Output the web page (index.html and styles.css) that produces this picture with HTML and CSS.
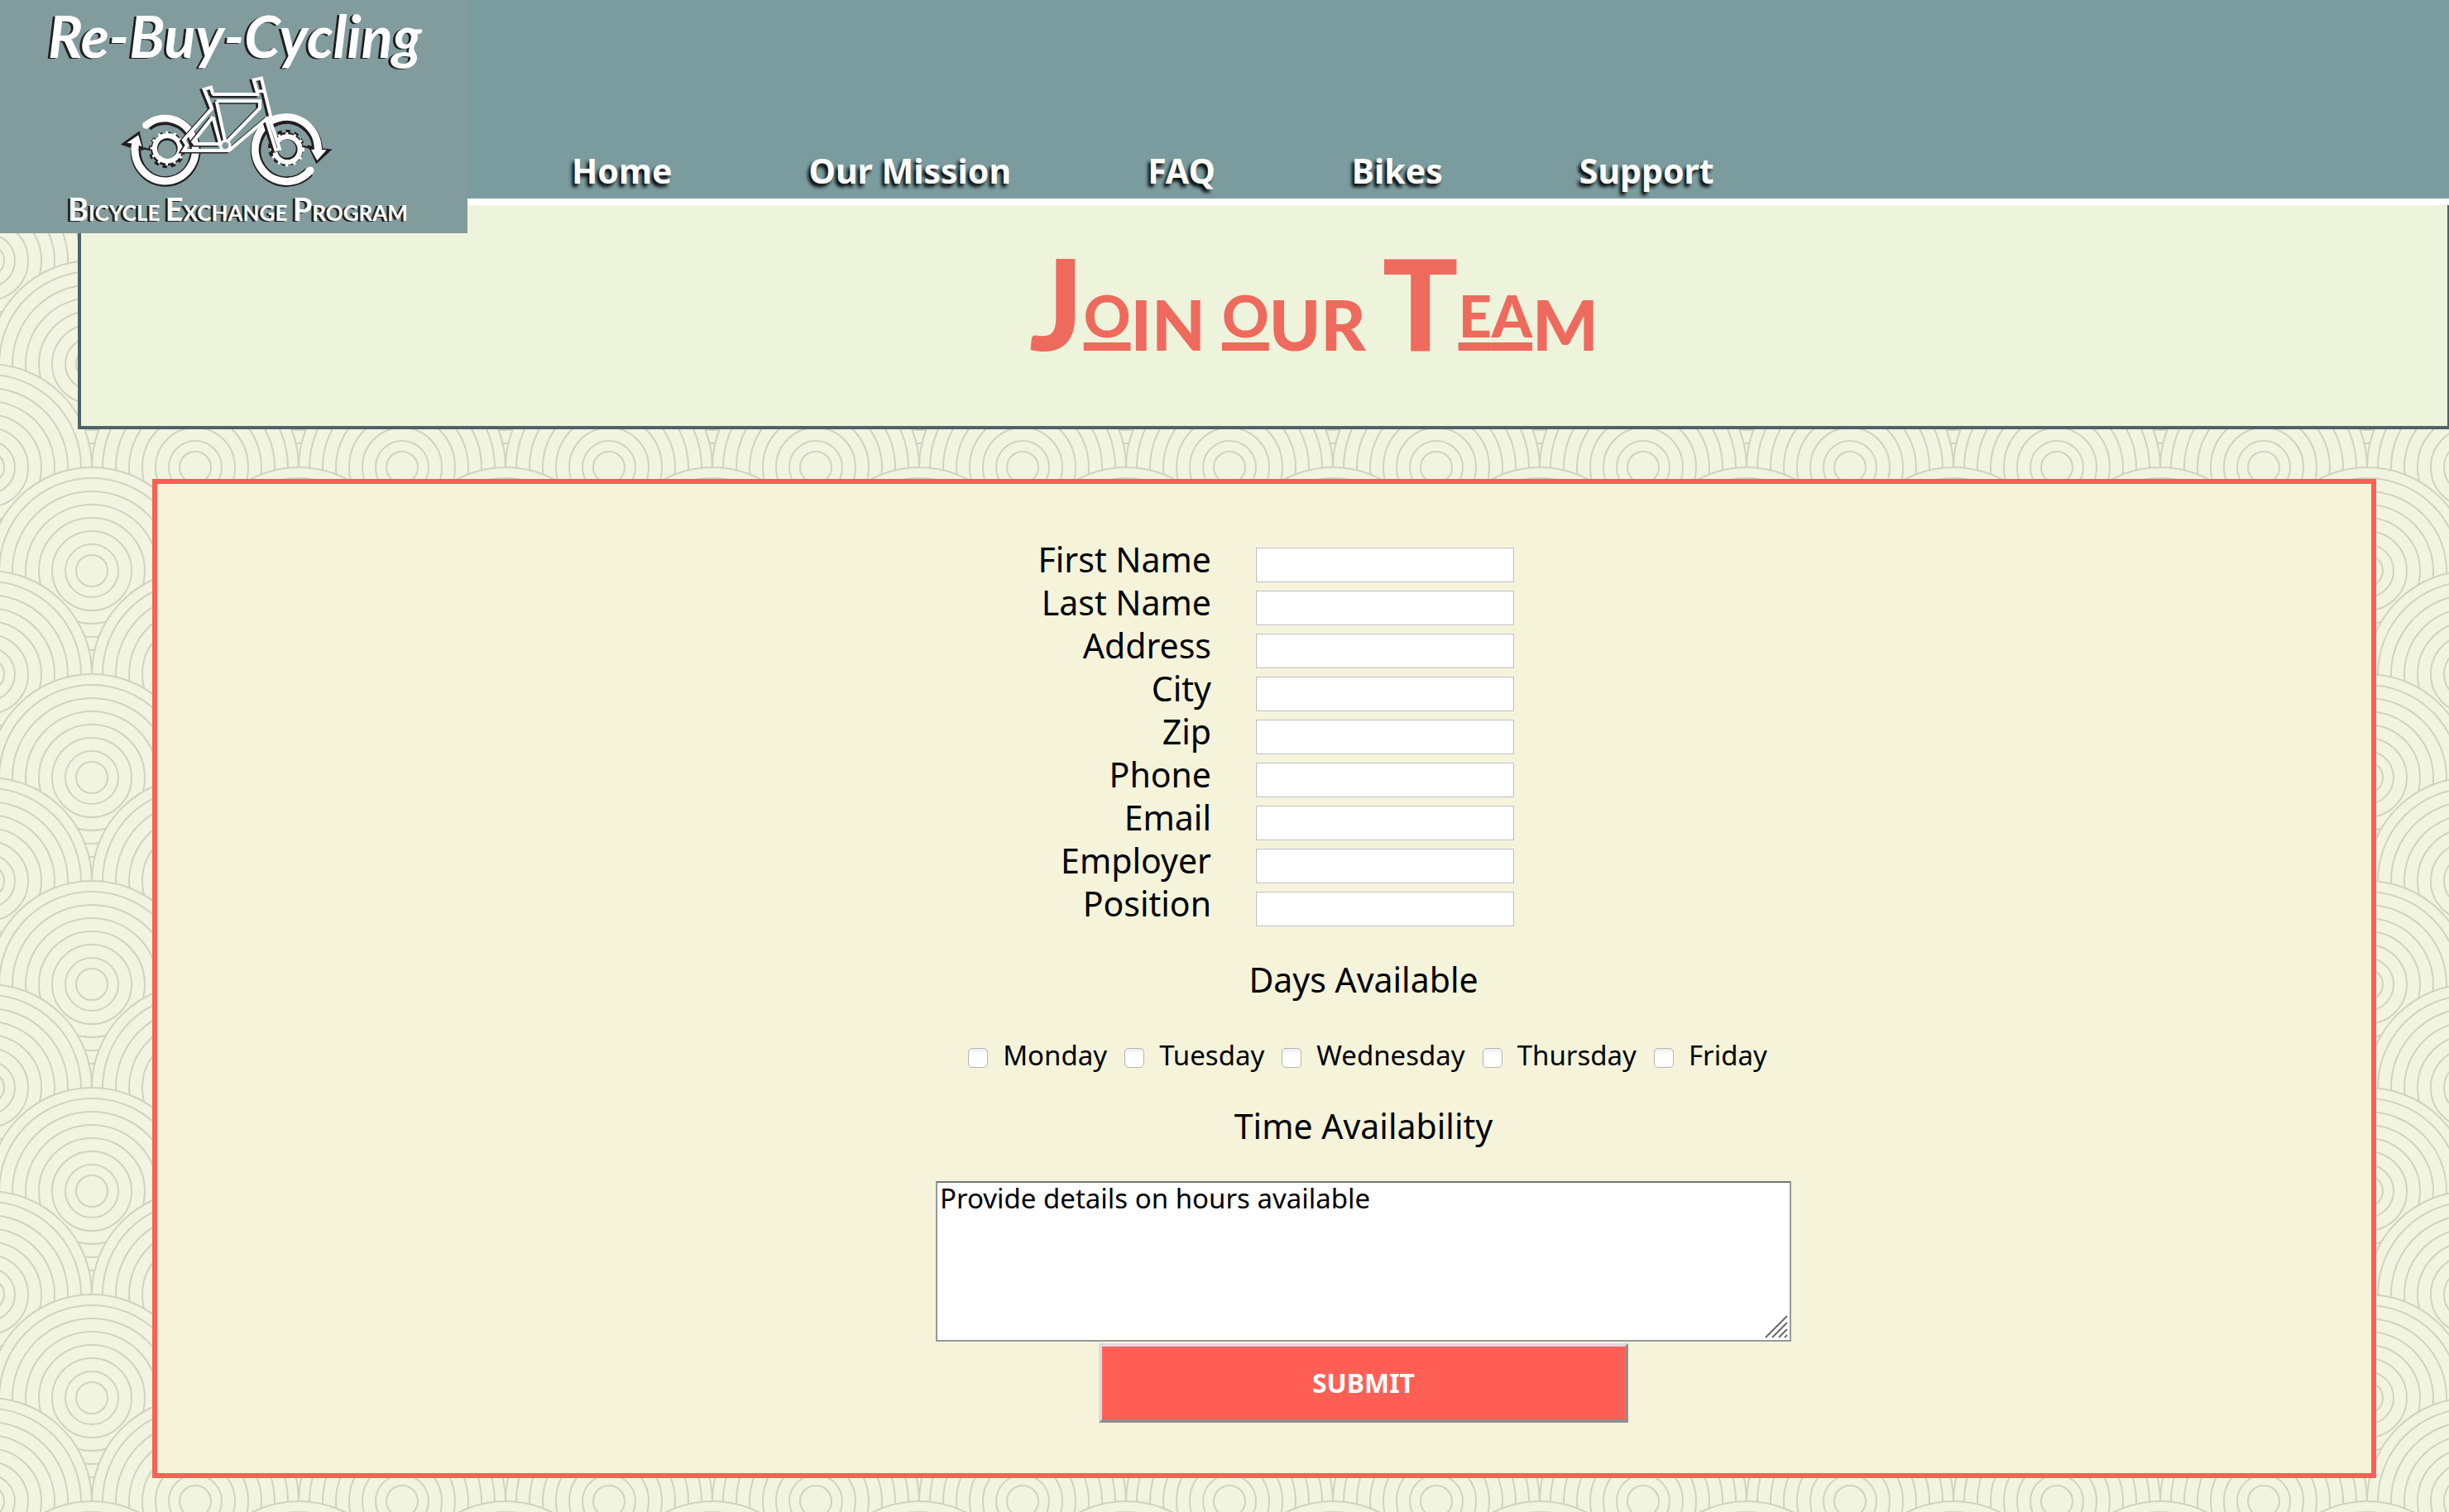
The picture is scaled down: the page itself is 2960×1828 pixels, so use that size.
FILE: index.html
```html
<!DOCTYPE html>
<html lang="en">
<head>
<meta charset="utf-8">
<title>Re-Buy-Cycling | Join Our Team</title>
<link rel="stylesheet" href="styles.css">
</head>
<body>
<header class="site-header">
  <a class="logo" href="#" aria-label="Re-Buy-Cycling Bicycle Exchange Program">
    <svg viewBox="0 0 565 282" width="565" height="282">
      <text class="logo-script" x="58" y="70">Re-Buy-Cycling</text>
      <g transform="translate(140 84) scale(.3333)" fill="none">
        <g stroke="#231f20">
          <path stroke-width="38" d="M115 205A108 112 0 1 1 72 290M700 372A112 114 0 1 1 731 285"/>
          <path fill="#231f20" stroke-width="6" d="M24 271L84 228L98 290L72 288ZM778 292L728 338L700 278L731 287Z"/>
        </g>
        <g stroke="#fff">
          <path stroke-width="27" stroke-linecap="round" d="M110 202A110 114 0 1 1 70 275M705 366A114 117 0 1 1 733 290"/>
          <path fill="#fff" stroke="none" d="M40 266L82 238L94 280L72 270ZM764 292L730 330L708 290Z"/>
        </g>
        <g stroke="#231f20">
          <circle cx="185" cy="292" r="56" stroke-width="20" stroke-dasharray="15 14"/>
          <circle cx="618" cy="284" r="56" stroke-width="20" stroke-dasharray="15 14"/>
          <circle cx="186" cy="290" r="46" stroke-width="26"/>
          <circle cx="620" cy="287" r="46" stroke-width="26"/>
          <path stroke-width="7" d="M100 286L130 292M674 278L716 286"/>
        </g>
        <g stroke="#fff">
          <circle cx="187" cy="286" r="46" stroke-width="18"/>
          <circle cx="622" cy="290" r="46" stroke-width="18"/>
          <circle cx="187" cy="286" r="57" stroke-width="10" stroke-dasharray="9 20"/>
          <circle cx="622" cy="290" r="57" stroke-width="10" stroke-dasharray="9 20"/>
        </g>
        <g stroke="#231f20" stroke-width="13" transform="translate(-8 4)">
          <path d="M352 90L345 65L320 72L348 142L246 256L258 275L246 294H410L545 180L580 292L594 288L555 172M350 92H520M540 78L512 80L500 38L528 32L562 172L545 180M365 115H522V140L403 262M365 115L397 262M352 172L280 262L286 270H378M352 172L378 266"/>
        </g>
        <g stroke="#fff" stroke-width="12">
          <path d="M352 90L345 65L320 72L348 142L246 256L258 275L246 294H410L545 180L580 292L594 288L555 172M350 90H520M540 78L512 80L500 38L528 32L562 172L545 180M365 115H522V140L403 262M365 115L397 262M352 172L280 262L286 270H378M352 172L378 266"/>
          <circle cx="397" cy="276" r="17" fill="#829c9d" stroke-width="9"/>
        </g>
      </g>
      <text class="logo-caps" x="82" y="267"><tspan class="logo-initial">B</tspan>ICYCLE <tspan class="logo-initial">E</tspan>XCHANGE <tspan class="logo-initial">P</tspan>ROGRAM</text>
    </svg>
  </a>
  <nav class="main-nav">
    <a href="#">Home</a>
    <a href="#">Our Mission</a>
    <a href="#">FAQ</a>
    <a href="#">Bikes</a>
    <a href="#">Support</a>
  </nav>
</header>

<section class="banner">
  <h1><span class="tall">J</span><span class="lined">O</span>IN <span class="lined">O</span>UR <span class="tall">T</span><span class="lined">E</span><span class="lined">A</span>M</h1>
</section>

<main class="panel">
  <form class="team-form">
    <div class="field"><label for="first">First Name</label><input id="first" type="text"></div>
    <div class="field"><label for="last">Last Name</label><input id="last" type="text"></div>
    <div class="field"><label for="address">Address</label><input id="address" type="text"></div>
    <div class="field"><label for="city">City</label><input id="city" type="text"></div>
    <div class="field"><label for="zip">Zip</label><input id="zip" type="text"></div>
    <div class="field"><label for="phone">Phone</label><input id="phone" type="tel"></div>
    <div class="field"><label for="email">Email</label><input id="email" type="email"></div>
    <div class="field"><label for="employer">Employer</label><input id="employer" type="text"></div>
    <div class="field"><label for="position">Position</label><input id="position" type="text"></div>

    <h2 id="days-title">Days Available</h2>
    <div class="days" role="group" aria-labelledby="days-title">
      <label><input type="checkbox">Monday</label>
      <label><input type="checkbox">Tuesday</label>
      <label><input type="checkbox">Wednesday</label>
      <label><input type="checkbox">Thursday</label>
      <label><input type="checkbox">Friday</label>
    </div>

    <h2><label for="hours">Time Availability</label></h2>
    <textarea id="hours">Provide details on hours available</textarea>
    <button class="submit" type="submit">SUBMIT</button>
  </form>
</main>
</body>
</html>
```
FILE: styles.css
```css
* { box-sizing: border-box; }

body {
  margin: 0;
  font-family: "Noto Sans", "Lucida Grande", sans-serif;
  font-size: 41px;
  color: #000;
  background-color: #f1f4e0;
  background-image: url("data:image/svg+xml,%3Csvg xmlns='http://www.w3.org/2000/svg' xmlns:xlink='http://www.w3.org/1999/xlink' width='250' height='250'%3E%3Cdefs%3E%3Cg id='c' fill='none' stroke='%23d0d4bf' stroke-width='2'%3E%3Ccircle r='125' fill='%23f1f4e0'/%3E%3Ccircle r='112'/%3E%3Ccircle r='96'/%3E%3Ccircle r='80'/%3E%3Ccircle r='64'/%3E%3Ccircle r='48'/%3E%3Ccircle r='32'/%3E%3Ccircle r='19'/%3E%3C/g%3E%3C/defs%3E%3Cuse xlink:href='%23c' x='-14' y='-185'/%3E%3Cuse xlink:href='%23c' x='236' y='-185'/%3E%3Cuse xlink:href='%23c' x='111' y='-60'/%3E%3Cuse xlink:href='%23c' x='361' y='-60'/%3E%3Cuse xlink:href='%23c' x='-14' y='65'/%3E%3Cuse xlink:href='%23c' x='236' y='65'/%3E%3Cuse xlink:href='%23c' x='111' y='190'/%3E%3Cuse xlink:href='%23c' x='361' y='190'/%3E%3Cuse xlink:href='%23c' x='-14' y='315'/%3E%3Cuse xlink:href='%23c' x='236' y='315'/%3E%3C/svg%3E");
}

.site-header {
  position: relative;
  background: #7b9c9e;
  border-bottom: 8px solid #fff;
}

.logo {
  position: absolute;
  top: 0;
  left: 0;
  background: #829c9d;
}

.logo svg { display: block; }

.logo text {
  font-family: Lato, sans-serif;
  fill: #fff;
  text-shadow: -3px 1px 0 #231f20;
}

.logo .logo-script {
  font-size: 70px;
  font-style: italic;
  font-weight: 700;
}

.logo .logo-caps {
  font-size: 26px;
  font-weight: 700;
}

.logo-initial { font-size: 38px; }

.main-nav {
  display: flex;
  gap: 165px;
  padding: 182px 0 10px 691px;
}

.main-nav a {
  color: #fff;
  font-size: 41px;
  font-weight: 700;
  line-height: 48px;
  text-decoration: none;
  text-shadow: -3px 4px 4px #000;
}

.banner {
  margin-left: 94px;
  padding: 36px 0 42px 120px;
  background: #eef3dc;
  border: 4px solid #4e6267;
  border-top: 0;
  border-right-width: 2px;
  text-align: center;
}

.banner h1 {
  margin: 0;
  color: #ee6a5d;
  font-family: Lato, sans-serif;
  font-size: 84px;
  font-weight: 900;
  line-height: 162px;
}

.banner .tall { font-size: 152px; }

.banner .lined {
  font-size: 70px;
  vertical-align: 16px;
  text-decoration: underline;
  text-decoration-thickness: 10px;
  text-decoration-skip-ink: none;
  text-underline-offset: 6px;
}

.panel {
  margin: 60px 88px 42px 184px;
  padding: 72px 0 61px 240px;
  background: #f5f4da;
  border: 6px solid #ff5f55;
}

.team-form {
  display: flex;
  flex-direction: column;
  width: 1034px;
  margin: 0 auto;
}

.field {
  display: grid;
  grid-template-columns: 333px 312px;
  column-gap: 54px;
  height: 52px;
  align-items: center;
}

.field label {
  align-self: start;
  line-height: 38px;
  text-align: right;
}

.field input {
  height: 42px;
  padding: 2px 4px;
  border: 1px solid #bcbcc0;
  outline: 1px solid #f8f8ea;
  background: #fff;
  font: inherit;
  font-size: 28px;
}

.team-form h2 {
  margin: 33px 0 0;
  font-size: 41px;
  font-weight: 400;
  line-height: 52px;
  text-align: center;
}

.days {
  display: flex;
  justify-content: center;
  gap: 21px;
  margin: 46px 0 6px;
  padding-left: 10px;
  font-size: 33px;
  line-height: 40px;
}

.days label {
  display: flex;
  align-items: center;
  gap: 18px;
}

.days input {
  appearance: none;
  width: 24px;
  height: 24px;
  margin: 6px 0 0;
  border: 1px solid #b4b4b4;
  border-radius: 5px;
  background: linear-gradient(#ededed, #fff 30%);
}

textarea {
  height: 194px;
  margin: 41px 0 2px;
  padding: 0 3px;
  border: 2px solid #97979c;
  border-top-color: #747474;
  background: #fff url("data:image/svg+xml,%3Csvg xmlns='http://www.w3.org/2000/svg' width='28' height='28'%3E%3Cpath d='M1 27L27 1M9 27L27 9M17 27L27 17M24 27L27 24' stroke='%23696969' stroke-width='2'/%3E%3C/svg%3E") no-repeat right 2px bottom 2px;
  color: #000;
  font: 33px/38px "Noto Sans", sans-serif;
  resize: none;
}

.submit {
  align-self: center;
  width: 640px;
  height: 96px;
  border: 4px solid;
  border-color: #dcdcdc #8f8f8f #8f8f8f #dcdcdc;
  background: #ff5f55;
  color: #fff;
  font: 700 32px/40px "Noto Sans", sans-serif;
}
```
